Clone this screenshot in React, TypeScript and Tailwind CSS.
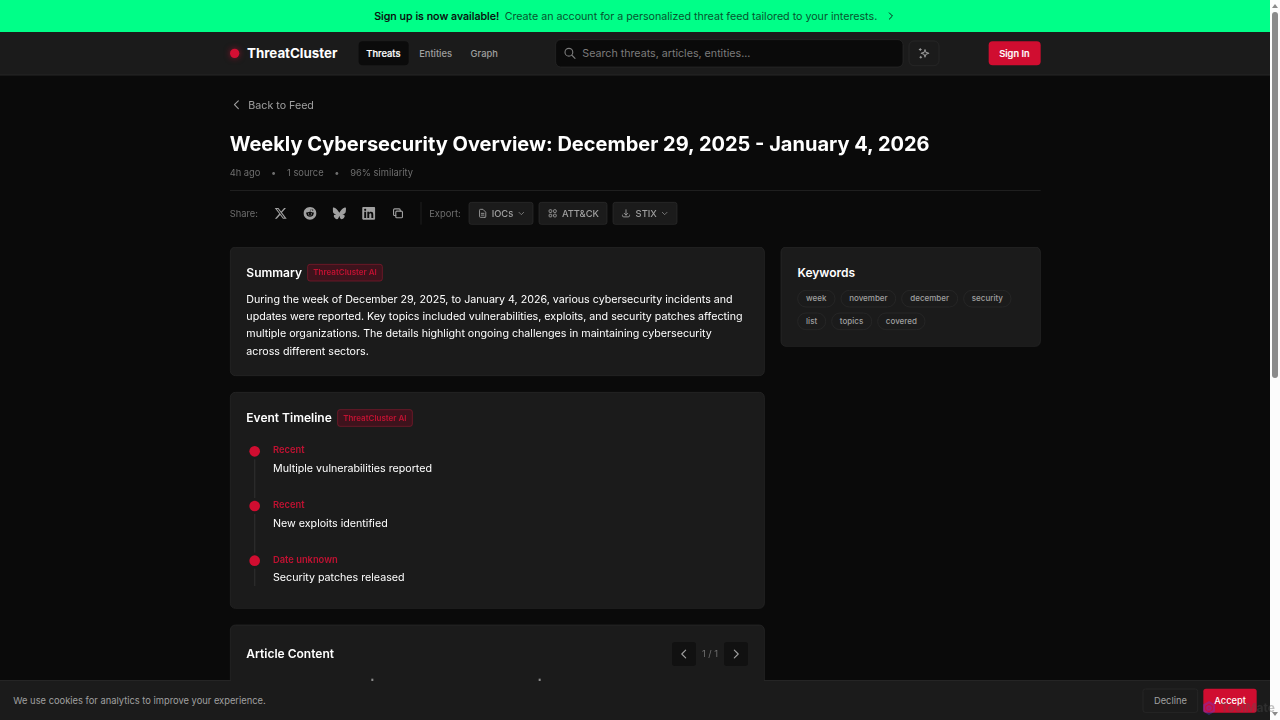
import type { ReactNode } from 'react';
import { FaLinkedin, FaReddit } from 'react-icons/fa';
import { FaBluesky, FaXTwitter } from 'react-icons/fa6';

const NAV = ['Threats', 'Entities', 'Graph'];

const KEYWORDS = ['week', 'november', 'december', 'security', 'list', 'topics', 'covered'];

const EVENTS = [
  { when: 'Recent', title: 'Multiple vulnerabilities reported' },
  { when: 'Recent', title: 'New exploits identified' },
  { when: 'Date unknown', title: 'Security patches released' },
];

function Chevron({ d, className }: { d: string; className: string }) {
  return (
    <svg viewBox="0 0 24 24" fill="none" stroke="currentColor" strokeWidth="2" strokeLinecap="round" strokeLinejoin="round" className={className}>
      <path d={d} />
    </svg>
  );
}

const LEFT = 'M15 19l-7-7 7-7';
const RIGHT = 'M9 5l7 7-7 7';
const DOWN = 'M19 9l-7 7-7-7';

function SearchIcon() {
  return (
    <svg viewBox="0 0 24 24" fill="none" stroke="currentColor" strokeWidth="2" strokeLinecap="round" strokeLinejoin="round" className="size-5">
      <path d="M21 21l-6-6m2-5a7 7 0 11-14 0 7 7 0 0114 0z" />
    </svg>
  );
}

function SparkIcon() {
  return (
    <svg viewBox="0 0 24 24" fill="none" stroke="currentColor" strokeWidth="2" strokeLinejoin="round" strokeLinecap="round" className="size-[18px]">
      <path d="M14 4.5 16 10l5.5 2-5.5 2-2 5.5-2-5.5-5.5-2 5.5-2z" />
      <path d="M4.5 2.5v4M2.5 4.5h4M5.5 18v3.5M3.8 19.8h3.5" />
    </svg>
  );
}

function CopyIcon() {
  return (
    <svg viewBox="0 0 24 24" fill="none" stroke="currentColor" strokeWidth="2" strokeLinejoin="round" strokeLinecap="round" className="size-5">
      <path d="M8 16H6a2 2 0 0 1-2-2V6a2 2 0 0 1 2-2h8a2 2 0 0 1 2 2v2" />
      <rect x="8" y="8" width="12" height="12" rx="2" />
    </svg>
  );
}

function DocIcon() {
  return (
    <svg viewBox="0 0 24 24" fill="none" stroke="currentColor" strokeWidth="2" strokeLinejoin="round" strokeLinecap="round" className="size-4">
      <path d="M9 12h6M9 16h6M17 21H7a2 2 0 0 1-2-2V5a2 2 0 0 1 2-2h5.6l6.4 6.4V19a2 2 0 0 1-2 2z" />
    </svg>
  );
}

function GridIcon() {
  return (
    <svg viewBox="0 0 24 24" fill="none" stroke="currentColor" strokeWidth="2" className="size-4">
      <rect x="4" y="4" width="6" height="6" rx="1.5" />
      <rect x="14" y="4" width="6" height="6" rx="1.5" />
      <rect x="4" y="14" width="6" height="6" rx="1.5" />
      <rect x="14" y="14" width="6" height="6" rx="1.5" />
    </svg>
  );
}

function DownloadIcon() {
  return (
    <svg viewBox="0 0 24 24" fill="none" stroke="currentColor" strokeWidth="2" strokeLinejoin="round" strokeLinecap="round" className="size-4">
      <path d="M4 16v1a3 3 0 0 0 3 3h10a3 3 0 0 0 3-3v-1M16 12l-4 4-4-4M12 16V4" />
    </svg>
  );
}

function Card({ children, className = '' }: { children: ReactNode; className?: string }) {
  return <section className={`rounded-lg border border-[#2a2a2a] bg-[#1b1b1b] p-6 ${className}`}>{children}</section>;
}

function AiBadge() {
  return (
    <span className="rounded border border-[#8a1a2e] bg-[#3d131c] px-2 py-1 text-xs leading-4 font-semibold text-[#c01232]">
      ThreatCluster AI
    </span>
  );
}

function ExportButton({ icon, label, menu }: { icon: ReactNode; label: string; menu?: boolean }) {
  return (
    <button className="flex h-[34px] items-center gap-1.5 rounded border border-[#2f2f2f] bg-[#1b1b1b] px-[11.5px] text-sm font-medium text-[#a0a0a0]">
      {icon}
      {label}
      {menu && <Chevron d={DOWN} className="size-3" />}
    </button>
  );
}

function Header() {
  return (
    <header className="border-b border-[#2a2a2a] bg-[#1b1b1b]">
      <div className="mx-auto flex h-16 w-[1216px] items-center">
        <div className="flex w-[488px] items-center">
          <div className="flex w-[193px] items-center gap-3">
            <span className="size-3.5 rounded-full bg-[#d40f33] shadow-[0_0_10px_rgba(212,15,51,0.6)]" />
            <span className="text-xl font-bold text-white">ThreatCluster</span>
          </div>
          <nav className="flex gap-1">
            {NAV.map((item, i) => (
              <a
                key={item}
                className={`rounded-md px-3 py-2 text-sm font-medium ${i === 0 ? 'bg-[#0b0b0b] text-white [-webkit-text-stroke:0.3px]' : 'text-[#a0a0a0]'}`}
              >
                {item}
              </a>
            ))}
          </nav>
        </div>
        <div className="flex h-[42px] w-[522px] items-center gap-[9px] rounded-lg border border-[#2a2a2a] bg-[#0a0a0a] px-[11px] text-[#7c7c7c]">
          <SearchIcon />
          <span className="text-base">Search threats, articles, entities...</span>
        </div>
        <button className="ml-2 flex h-[38px] w-[46px] items-center justify-center rounded-lg border border-[#2a2a2a] text-[#9a9a9a]">
          <SparkIcon />
        </button>
        <button className="ml-auto rounded-md bg-[#d00d30] px-4 py-2 text-sm font-medium text-white [-webkit-text-stroke:0.3px]">
          Sign In
        </button>
      </div>
    </header>
  );
}

function Toolbar() {
  return (
    <div className="flex h-[34px] items-center text-sm text-[#6f6f6f]">
      <span>Share:</span>
      <div className="ml-4 flex gap-2 text-[#a0a0a0]">
        {[
          <FaXTwitter key="x" className="size-5" />,
          <FaReddit key="reddit" className="size-5" />,
          <FaBluesky key="bluesky" className="size-5" />,
          <FaLinkedin key="linkedin" className="size-[22px]" />,
          <CopyIcon key="copy" />,
        ].map((icon, i) => (
          <button key={i} className="flex size-9 items-center justify-center">
            {icon}
          </button>
        ))}
      </div>
      <div className="ml-4 flex h-[34px] items-center border-l border-[#2a2a2a] pl-3">
        <span>Export:</span>
        <div className="ml-3 flex gap-2">
          <ExportButton icon={<DocIcon />} label="IOCs" menu />
          <ExportButton icon={<GridIcon />} label="ATT&CK" />
          <ExportButton icon={<DownloadIcon />} label="STIX" menu />
        </div>
      </div>
    </div>
  );
}

function Timeline() {
  return (
    <Card>
      <div className="mb-6 flex h-7 items-center gap-2">
        <h2 className="text-lg font-semibold text-white">Event Timeline</h2>
        <AiBadge />
      </div>
      <div className="pb-[9px]">
        {EVENTS.map((event, i) => (
          <div key={i} className="flex gap-4">
            <div className="flex w-6 flex-col items-center pt-1">
              <span className="size-4 rounded-full bg-[#d00d30]" />
              <span className="mt-1 w-0.5 flex-1 bg-[#2a2a2a]" />
            </div>
            <div className={i < EVENTS.length - 1 ? 'pb-8' : ''}>
              <div className="text-sm font-semibold text-[#c01232]">{event.when}</div>
              <div className="mt-1 text-base leading-[26px] text-white">{event.title}</div>
            </div>
          </div>
        ))}
      </div>
    </Card>
  );
}

function ArticleContent() {
  return (
    <Card className="h-[300px]">
      <div className="flex h-[38px] items-center justify-between">
        <h2 className="text-lg font-semibold text-white">Article Content</h2>
        <div className="flex items-center gap-[9px] text-sm text-[#6f6f6f]">
          <button className="flex size-9 items-center justify-center rounded bg-[#111111] text-[#a0a0a0]">
            <Chevron d={LEFT} className="size-5" />
          </button>
          <span>1 / 1</span>
          <button className="flex size-9 items-center justify-center rounded bg-[#111111] text-[#a0a0a0]">
            <Chevron d={RIGHT} className="size-5" />
          </button>
        </div>
      </div>
      {/* only the tips of the first article line show above the cookie bar */}
      <div className="mt-[18px] ml-[187px] flex gap-[248px]">
        <span className="h-2 w-[3px] bg-[#8a8a8a]" />
        <span className="h-2 w-[3px] bg-[#8a8a8a]" />
      </div>
    </Card>
  );
}

function CookieBar() {
  return (
    <footer className="flex h-[60px] shrink-0 items-center justify-between border-t border-[#2a2a2a] bg-[#1b1b1b] px-5 text-sm text-[#a0a0a0]">
      <span>We use cookies for analytics to improve your experience.</span>
      <div className="flex gap-2">
        <button className="h-9 rounded border border-[#2a2a2a] px-4">Decline</button>
        <button className="h-9 rounded bg-[#d00d30] px-4 font-medium text-white">Accept</button>
      </div>
    </footer>
  );
}

function Scrollbar() {
  return (
    <div className="flex h-[720px] w-[10px] flex-col items-center bg-[#fcfcfc] py-[4px]">
      <span className="border-x-[3px] border-b-[4px] border-x-transparent border-b-[#8a8a8a]" />
      <span className="mt-[4px] h-[366px] w-[6px] rounded-full bg-[#8b8b8b]" />
      <span className="mt-auto border-x-[3px] border-t-[4px] border-x-transparent border-t-[#8a8a8a]" />
    </div>
  );
}

export default function App() {
  return (
    <div className="relative flex h-[720px] w-[1280px] overflow-hidden bg-[#0a0a0a] font-['Inter',sans-serif]">
      <div className="h-[720px] w-[1270px] shrink-0 overflow-hidden">
        <div className="flex h-[1080px] w-[1905px] origin-top-left scale-[0.666667] flex-col">
          <div className="min-h-0 flex-1 overflow-hidden">
            <div className="flex h-12 items-center justify-center bg-[#00ff88] text-base text-[#0a0a0a]">
              <span className="font-medium [-webkit-text-stroke:0.2px]">Sign up is now available!</span>
              <span className="ml-2 text-[#07552f]">Create an account for a personalized threat feed tailored to your interests.</span>
              <Chevron d={RIGHT} className="ml-3 size-4" />
            </div>
            <Header />
            <main className="mx-auto w-[1216px] pt-8">
              <a className="flex h-6 items-center gap-2 text-base text-[#a0a0a0]">
                <Chevron d={LEFT} className="size-5" />
                Back to Feed
              </a>
              <h1 className="mt-7 text-3xl font-bold text-white">Weekly Cybersecurity Overview: December 29, 2025 - January 4, 2026</h1>
              <div className="mt-4 flex items-center gap-4 text-sm text-[#6f6f6f]">
                <span>4h ago</span>
                <span>•</span>
                <span>1 source</span>
                <span>•</span>
                <span>96% similarity</span>
              </div>
              <div className="mt-4 border-t border-[#2a2a2a] pt-[17px]">
                <Toolbar />
              </div>
              <div className="mt-[33px] grid grid-cols-3 items-start gap-6">
                <div className="col-span-2 flex flex-col gap-6">
                  <Card>
                    <div className="mb-3 flex h-7 items-center gap-2">
                      <h2 className="text-lg font-semibold text-white">Summary</h2>
                      <AiBadge />
                    </div>
                    <p className="text-base leading-[26px] text-white">
                      During the week of December 29, 2025, to January 4, 2026, various cybersecurity incidents and updates were
                      reported. Key topics included vulnerabilities, exploits, and security patches affecting multiple
                      organizations. The details highlight ongoing challenges in maintaining cybersecurity across different
                      sectors.
                    </p>
                  </Card>
                  <Timeline />
                  <ArticleContent />
                </div>
                <Card>
                  <h2 className="mb-3 text-lg leading-7 font-semibold text-white">Keywords</h2>
                  <div className="flex flex-wrap gap-2">
                    {KEYWORDS.map(word => (
                      <span key={word} className="rounded-full border border-[#2a2a2a] px-3 py-1 text-xs leading-4 font-medium text-[#a0a0a0]">
                        {word}
                      </span>
                    ))}
                  </div>
                </Card>
              </div>
            </main>
          </div>
          <CookieBar />
        </div>
      </div>
      <Scrollbar />
      {/* faint watermark over the bottom right corner */}
      <div className="absolute right-[5px] bottom-[4px] flex items-center gap-[4px] text-[12px] leading-4 font-bold text-[#555555] opacity-35">
        <svg viewBox="0 0 16 16" fill="none" stroke="#5a3df0" strokeWidth="2.5" className="size-[14px]">
          <path d="M8 1.5 13.6 4.8V11.2L8 14.5 2.4 11.2V4.8Z" />
          <circle cx="8" cy="8" r="2" />
        </svg>
        ToolMate
      </div>
    </div>
  );
}
